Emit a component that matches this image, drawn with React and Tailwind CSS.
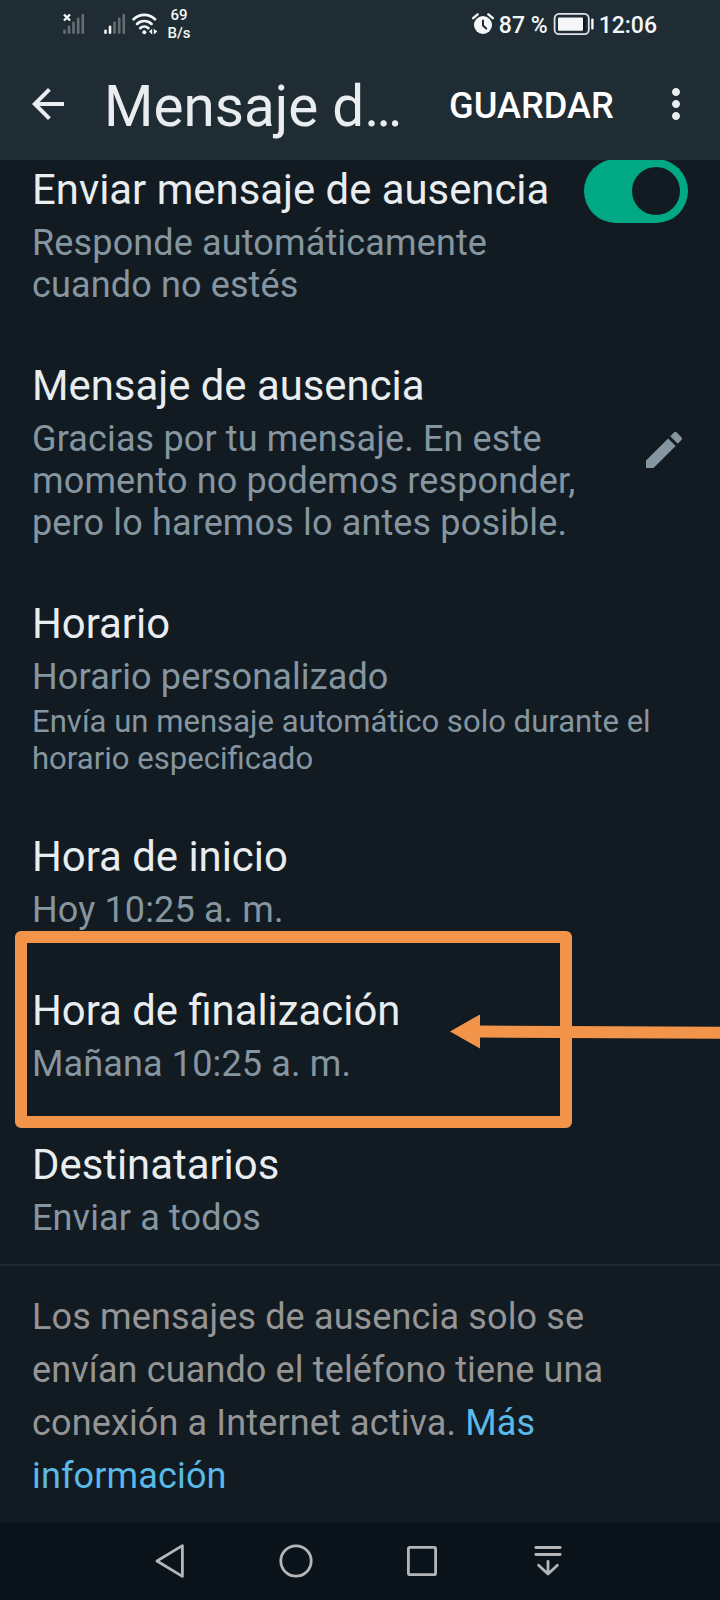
import React, { useState } from 'react';
import { MdArrowBack, MdMoreVert, MdEdit } from 'react-icons/md';

// Bar tops for the mobile signal icon, left to right
const SIGNAL_BARS = [
  { x: 1.5, top: 16.5 },
  { x: 6, top: 12.5 },
  { x: 10.5, top: 8.5 },
  { x: 15.2, top: 4.5 },
  { x: 19.8, top: 0.8 },
];

function SignalIcon({ level, missing, className }) {
  return (
    <svg width="22" height="22" viewBox="0 0 22 22" className={className}>
      {SIGNAL_BARS.map((bar, i) => (
        <line
          key={bar.x}
          x1={bar.x}
          x2={bar.x}
          y1={bar.top + 1.2}
          y2={19.8}
          stroke={i < level ? '#f4f6f7' : '#656e73'}
          strokeWidth="2.6"
          strokeLinecap="round"
        />
      ))}
      {missing && <path d="M1 1.5l6 6M7 1.5L1 7.5" stroke="#f4f6f7" strokeWidth="2.4" />}
    </svg>
  );
}

function WifiIcon() {
  return (
    <svg width="26" height="22" viewBox="0 0 26 22" className="ml-[6px]" fill="none" stroke="#f4f6f7" strokeLinecap="round">
      <path d="M1.6 6.2a15.4 15.4 0 0 1 21.4 0" strokeWidth="2.7" />
      <path d="M5 10.9a10.6 10.6 0 0 1 14.6 0" strokeWidth="2.7" />
      <path d="M8.3 15.1a6.2 6.2 0 0 1 8 0" strokeWidth="2.7" />
      <circle cx="12.3" cy="19.2" r="2" fill="#f4f6f7" stroke="none" />
      <path d="M20.2 15.8v5.6l-3.2-2.8zM21.8 15.8v5.6l3.6-2.8z" fill="#f4f6f7" stroke="none" />
    </svg>
  );
}

function AlarmIcon() {
  return (
    <svg width="22" height="22" viewBox="0 0 22 22">
      <circle cx="11" cy="12" r="9" fill="#f4f6f7" />
      <path d="M1.2 5.2L5.6 1.4M20.8 5.2L16.4 1.4" stroke="#f4f6f7" strokeWidth="2.4" strokeLinecap="round" />
      <path d="M11 7.6v5l3.2 3" stroke="#202c33" strokeWidth="2" fill="none" strokeLinecap="round" />
    </svg>
  );
}

function BatteryIcon() {
  return (
    <svg width="42" height="24" viewBox="0 0 42 24" className="ml-[5px]">
      <rect x="1.6" y="1.8" width="34.2" height="20.4" rx="4.5" fill="none" stroke="#dfe3e5" strokeWidth="1.8" />
      <rect x="5" y="5.4" width="25" height="13.4" rx="1" fill="#f4f6f7" />
      <rect x="30" y="5.4" width="2.4" height="13.4" fill="#0e171c" />
      <rect x="38.2" y="6.6" width="2.4" height="11" rx="1" fill="#f4f6f7" />
    </svg>
  );
}

function StatusBar() {
  return (
    <div className="flex h-[48px] items-center justify-between pl-[63px] pr-[63px] font-medium text-[#f4f6f7]">
      <div className="flex items-center">
        <SignalIcon level={0} missing />
        <SignalIcon level={2} className="ml-[19px]" />
        <WifiIcon />
        <div className="ml-[9px] w-[24px] text-center text-[15px] leading-[18px]">
          <div>69</div>
          <div>B/s</div>
        </div>
      </div>
      <div className="flex items-center">
        <AlarmIcon />
        <span className="ml-[5px] pt-[2px] text-[23px] leading-[27px]">87 %</span>
        <BatteryIcon />
        <span className="ml-[4px] pt-[2px] text-[23px] leading-[27px]">12:06</span>
      </div>
    </div>
  );
}

function Toggle({ on, onChange }) {
  return (
    <button
      role="switch"
      aria-checked={on}
      onClick={() => onChange(!on)}
      className={`-mt-[6px] flex h-[64px] w-[104px] shrink-0 items-center rounded-full p-2 ${
        on ? 'justify-end bg-[#00a884]' : 'justify-start bg-[#8696a0]'
      }`}
    >
      <span className="h-[48px] w-[48px] rounded-full bg-[#121b22]"></span>
    </button>
  );
}

function Setting({ title, value, note, action, children }) {
  return (
    <div className="relative flex items-start justify-between pl-8 pr-8">
      <div>
        <h2 className="whitespace-nowrap text-[41.85px] leading-[50px] text-[#e9edef]">{title}</h2>
        <p className="mt-[7px] whitespace-pre-line text-[36px] leading-[42px] tracking-[0.14px] text-[#8696a0]">{value}</p>
        {note && <p className="mt-[6px] whitespace-pre-line text-[31.08px] leading-[36.5px] text-[#8696a0]">{note}</p>}
      </div>
      {action}
      {children}
    </div>
  );
}

// Marker drawn over the end time row
function Highlight() {
  return (
    <>
      <div className="absolute left-[15px] top-[-55px] h-[197px] w-[557px] rounded-[6px] border-[12px] border-[#f3944b]"></div>
      <svg className="absolute left-[450px] top-[26px]" width="270" height="38" viewBox="0 0 270 38">
        <path d="M0 19.4L30 2.4v11.1l240 1.2v12.1l-240-1.2v11z" fill="#f3944b" />
      </svg>
    </>
  );
}

function NavBar() {
  return (
    <nav className="flex h-[78px] items-center bg-[#0b141a] pl-[107px] text-[#b4b6b8]">
      <button className="flex w-[126px] justify-center">
        <svg width="36" height="36" viewBox="0 0 36 36" fill="none" stroke="currentColor" strokeWidth="2.8" strokeLinejoin="round">
          <path d="M30.4 2.6v30.8L5 18z" />
        </svg>
      </button>
      <button className="flex w-[126px] justify-center">
        <svg width="36" height="36" viewBox="0 0 36 36" fill="none" stroke="currentColor" strokeWidth="2.8">
          <circle cx="18" cy="18" r="15.2" />
        </svg>
      </button>
      <button className="flex w-[126px] justify-center">
        <svg width="36" height="36" viewBox="0 0 36 36" fill="none" stroke="currentColor" strokeWidth="2.8">
          <rect x="4.4" y="4.4" width="27.2" height="27.2" rx="1.4" />
        </svg>
      </button>
      <button className="flex w-[126px] justify-center">
        <svg width="36" height="36" viewBox="0 0 36 36" fill="none" stroke="currentColor" strokeWidth="2.8" strokeLinecap="round" strokeLinejoin="round">
          <path d="M5.8 4.5h24.4M5.8 11.5h24.4M18 18.5v12M8.6 22.3l9.4 8.7 9.4-8.7" />
        </svg>
      </button>
    </nav>
  );
}

export default function App() {
  const [enabled, setEnabled] = useState(true);

  return (
    <div className="flex h-[1600px] w-[720px] flex-col overflow-hidden bg-[#121b22] font-['Roboto',sans-serif]">
      <header className="h-[160px] shrink-0 bg-[#202c33]">
        <StatusBar />
        <div className="flex h-[112px] items-center pl-6 pr-5">
          <MdArrowBack size={48} className="text-[#e9edef]" />
          <h1 className="ml-[32px] w-[320px] whitespace-nowrap pt-[5px] text-[56.6px] leading-[66px] text-[#e9edef]">Mensaje d…</h1>
          <button className="ml-[25px] whitespace-nowrap pt-[4px] text-[36.2px] font-medium leading-[42px] text-white">GUARDAR</button>
          <MdMoreVert size={48} className="ml-auto text-[#e9edef]" />
        </div>
      </header>

      <main className="flex h-[1362px] shrink-0 flex-col overflow-hidden">
        <section className="flex h-[1106px] flex-col gap-[55px] border-b-2 border-[#202c33] pt-[5px]">
          <Setting
            title="Enviar mensaje de ausencia"
            value={'Responde automáticamente\ncuando no estés'}
            action={<Toggle on={enabled} onChange={setEnabled} />}
          />
          <Setting
            title="Mensaje de ausencia"
            value={'Gracias por tu mensaje. En este\nmomento no podemos responder,\npero lo haremos lo antes posible.'}
            action={<MdEdit size={48} className="mt-[65px] shrink-0 text-[#8696a0]" />}
          />
          <Setting
            title="Horario"
            value="Horario personalizado"
            note={'Envía un mensaje automático solo durante el\nhorario especificado'}
          />
          <Setting title="Hora de inicio" value="Hoy 10:25 a. m." />
          <Setting title="Hora de finalización" value="Mañana 10:25 a. m.">
            <Highlight />
          </Setting>
          <Setting title="Destinatarios" value="Enviar a todos" />
        </section>

        <p className="px-8 pt-[25px] text-[36px] leading-[53px] tracking-[0.14px] text-[#959595]">
          Los mensajes de ausencia solo se
          <br />
          envían cuando el teléfono tiene una
          <br />
          conexión a Internet activa. <a className="text-[#5ab9e6]">Más<br />información</a>
        </p>
      </main>

      <NavBar />
    </div>
  );
}
